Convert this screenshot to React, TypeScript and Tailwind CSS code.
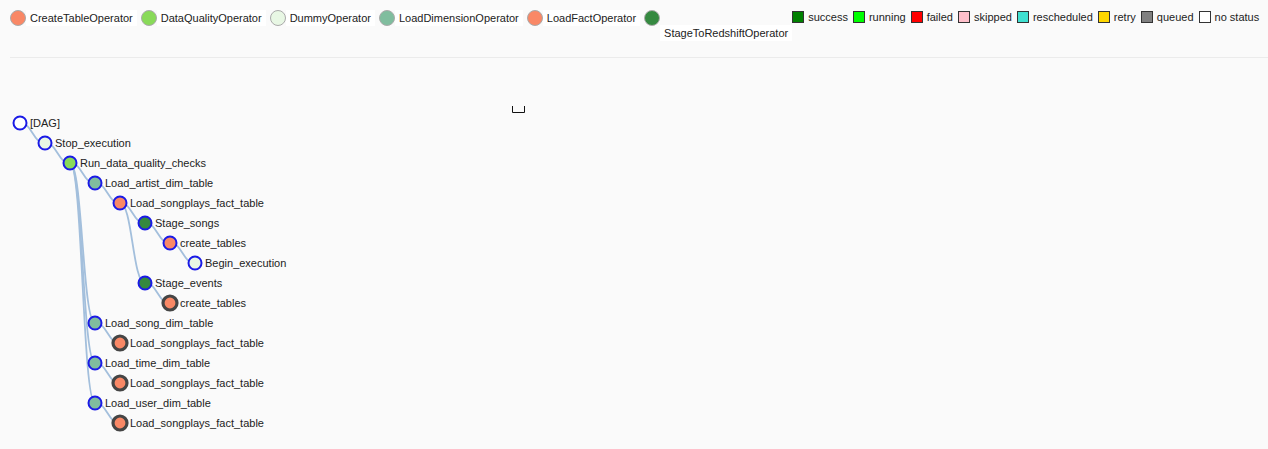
import React from 'react';

type TaskNode = { label: string; depth: number; fill: string; collapsed?: boolean };

const SALMON = '#F98866';
const LIME = '#89DA59';
const DUMMY = '#e8f7e4';
const TEAL = '#80BD9E';
const DARK = '#358940';

const operators = [
  { name: 'CreateTableOperator', color: SALMON },
  { name: 'DataQualityOperator', color: LIME },
  { name: 'DummyOperator', color: DUMMY },
  { name: 'LoadDimensionOperator', color: TEAL },
  { name: 'LoadFactOperator', color: SALMON },
];

const states = [
  { name: 'success', color: 'bg-[#008000]' },
  { name: 'running', color: 'bg-[#00ff00]' },
  { name: 'failed', color: 'bg-[#ff0000]' },
  { name: 'skipped', color: 'bg-[#ffc0cb]' },
  { name: 'rescheduled', color: 'bg-[#40e0d0]' },
  { name: 'retry', color: 'bg-[#ffd700]' },
  { name: 'queued', color: 'bg-[#808080]' },
  { name: 'no status', color: 'bg-white' },
];

const nodes: TaskNode[] = [
  { label: '[DAG]', depth: 0, fill: '#ffffff' },
  { label: 'Stop_execution', depth: 1, fill: DUMMY },
  { label: 'Run_data_quality_checks', depth: 2, fill: LIME },
  { label: 'Load_artist_dim_table', depth: 3, fill: TEAL },
  { label: 'Load_songplays_fact_table', depth: 4, fill: SALMON },
  { label: 'Stage_songs', depth: 5, fill: DARK },
  { label: 'create_tables', depth: 6, fill: SALMON },
  { label: 'Begin_execution', depth: 7, fill: DUMMY },
  { label: 'Stage_events', depth: 5, fill: DARK },
  { label: 'create_tables', depth: 6, fill: SALMON, collapsed: true },
  { label: 'Load_song_dim_table', depth: 3, fill: TEAL },
  { label: 'Load_songplays_fact_table', depth: 4, fill: SALMON, collapsed: true },
  { label: 'Load_time_dim_table', depth: 3, fill: TEAL },
  { label: 'Load_songplays_fact_table', depth: 4, fill: SALMON, collapsed: true },
  { label: 'Load_user_dim_table', depth: 3, fill: TEAL },
  { label: 'Load_songplays_fact_table', depth: 4, fill: SALMON, collapsed: true },
];

// parent index -> child index
const links: [number, number][] = [
  [0, 1], [1, 2], [2, 3], [2, 10], [2, 12], [2, 14],
  [3, 4], [4, 5], [4, 8], [5, 6], [6, 7], [8, 9],
  [10, 11], [12, 13], [14, 15],
];

const pos = (i: number) => ({ x: 20 + nodes[i].depth * 25, y: 65 + i * 20 });

const diagonal = (a: number, b: number) => {
  const s = pos(a);
  const t = pos(b);
  const m = (s.x + t.x) / 2;
  return `M${s.x},${s.y}C${m},${s.y} ${m},${t.y} ${t.x},${t.y}`;
};

export default function App() {
  return (
    <div className="min-h-[449px] bg-[#fafafa] text-[11px] text-[#222] font-['Liberation_Sans',Arial,sans-serif]">
      <div className="flex h-[57px] justify-between pl-[10px] pr-[9px] pt-[10px]">
        <div className="flex items-start">
          {operators.map(op => (
            <div key={op.name} className="mr-1 flex h-4 items-center">
              <span
                className="h-4 w-4 shrink-0 rounded-full border border-[#aaa]"
                style={{ backgroundColor: op.color }}
              />
              <span className="whitespace-nowrap bg-white px-1 leading-[16px]">{op.name}</span>
            </div>
          ))}
          <div className="flex items-start">
            <span className="h-4 w-4 shrink-0 rounded-full border border-[#aaa] bg-[#358940]" />
            <span className="mt-[15px] whitespace-nowrap bg-white px-1 leading-[16px]">StageToRedshiftOperator</span>
          </div>
        </div>
        <div className="flex h-[14px] shrink-0 items-center gap-[5px]">
          {states.map(s => (
            <div key={s.name} className="flex items-center">
              <span className={`h-3 w-3 shrink-0 border border-[#333] ${s.color}`} />
              <span className="ml-1 whitespace-nowrap">{s.name}</span>
            </div>
          ))}
        </div>
      </div>
      <div className="ml-[10px] h-px bg-[#ebebeb]" />
      <svg width="1268" height="391" className="block">
        <path d="M512.5,48 V54.5 H524.5 V48" fill="none" stroke="#111" strokeWidth="1" />
        {links.map(([a, b]) => (
          <path key={`${a}-${b}`} d={diagonal(a, b)} fill="none" stroke="#a3bfdc" strokeWidth="1.8" />
        ))}
        {nodes.map((n, i) => {
          const p = pos(i);
          return (
            <g key={i}>
              <circle
                cx={p.x}
                cy={p.y}
                r={n.collapsed ? 7 : 6.5}
                fill={n.fill}
                stroke={n.collapsed ? '#454545' : '#1a1ae6'}
                strokeWidth={n.collapsed ? 3.2 : 2}
              />
              <text x={p.x + 10} y={p.y + 4} fontSize="11" fill="#222">
                {n.label}
              </text>
            </g>
          );
        })}
      </svg>
    </div>
  );
}
